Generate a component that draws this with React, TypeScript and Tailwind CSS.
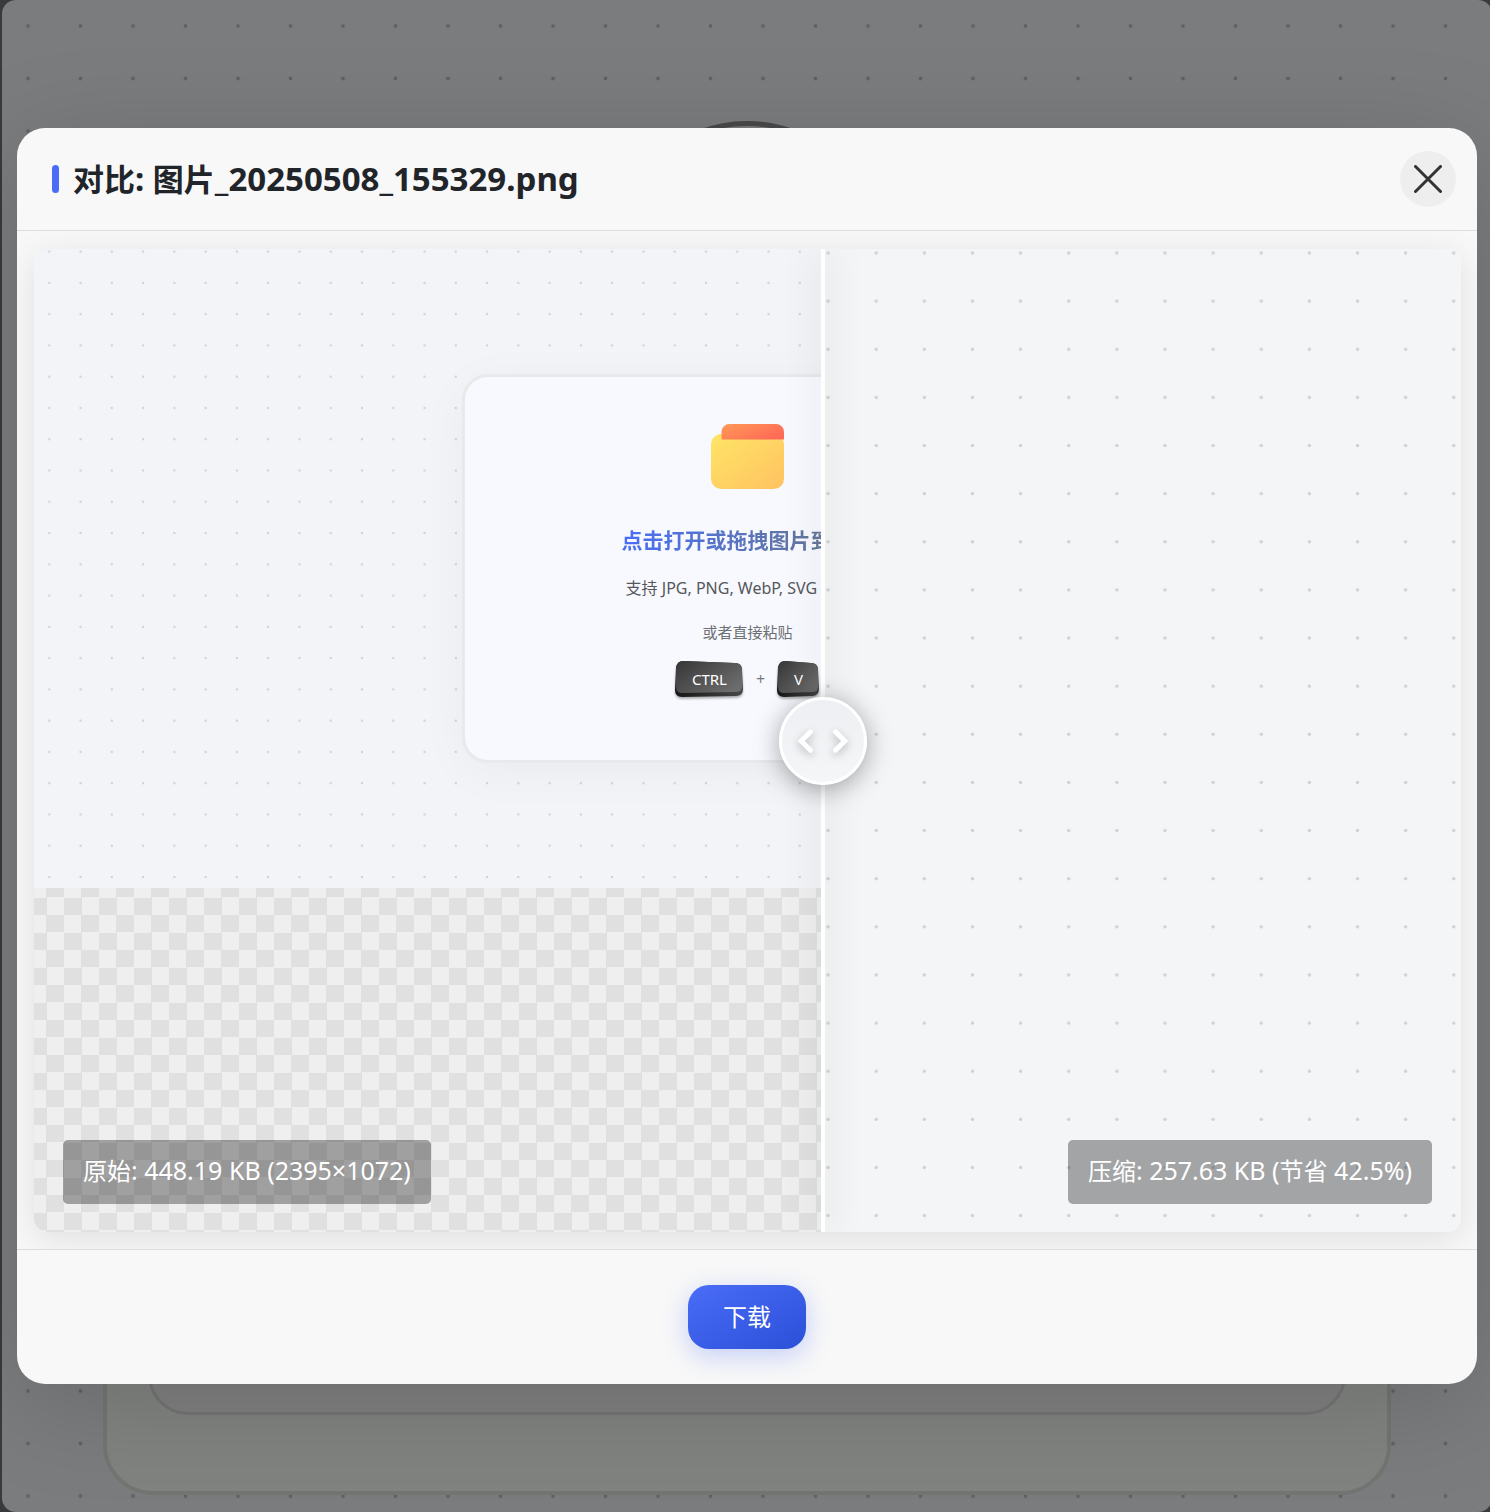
import { useState } from "react";

function DotGrid({ id, pitch, x, y, r, color }: { id: string; pitch: number; x: number; y: number; r: number; color: string }) {
  return (
    <svg className="absolute inset-0 h-full w-full" aria-hidden="true">
      <defs>
        <pattern id={id} width={pitch} height={pitch} patternUnits="userSpaceOnUse" x={x - pitch / 2} y={y - pitch / 2}>
          <circle cx={pitch / 2} cy={pitch / 2} r={r} fill={color} />
        </pattern>
      </defs>
      <rect width="100%" height="100%" fill={`url(#${id})`} />
    </svg>
  );
}

function FolderIcon() {
  return (
    <svg width="74" height="66" viewBox="0 0 74 66" aria-hidden="true">
      <defs>
        <linearGradient id="folder-front" x1="0" y1="0" x2="1" y2="1">
          <stop offset="0" stopColor="#ffe566" />
          <stop offset="1" stopColor="#ffc261" />
        </linearGradient>
        <linearGradient id="folder-tab" x1="0" y1="0" x2="1" y2="0.6">
          <stop offset="0" stopColor="#ff9a56" />
          <stop offset="1" stopColor="#ff6b57" />
        </linearGradient>
      </defs>
      <rect x="1" y="10" width="73" height="55" rx="10" fill="url(#folder-front)" />
      <path d="M11.500 15.500V8a8 8 0 0 1 8-8H66a8 8 0 0 1 8 8v7.500z" fill="url(#folder-tab)" />
    </svg>
  );
}

function Key({ label, wide }: { label: string; wide?: boolean }) {
  const w = wide ? 68 : 42;
  const id = `key-${label}`;
  return (
    <kbd
      className={
        wide
          ? "relative flex h-9 w-[68px] items-center justify-center text-[15px] leading-5 text-white"
          : "relative flex h-9 w-[42px] items-center justify-center text-[15px] leading-5 text-white"
      }
    >
      <svg className="absolute inset-0 overflow-visible drop-shadow-[0_2px_1px_rgba(0,0,0,0.3)]" width={w} height="36" viewBox={`0 0 ${w} 36`} aria-hidden="true">
        <defs>
          <linearGradient id={id} x1="0" y1="0" x2="1" y2="0.7">
            <stop offset="0" stopColor="#363636" />
            <stop offset="1" stopColor="#6c6c6c" />
          </linearGradient>
          <linearGradient id={`${id}-edge`} x1="0" y1="0" x2="1" y2="0">
            <stop offset="0" stopColor="#161616" />
            <stop offset="1" stopColor="#474747" />
          </linearGradient>
        </defs>
        <path
          d={`M1 7Q2 0 8 0L${w - 8} 2Q${w - 1} 2 ${w - 1} 9L${w} 28Q${w} 35 ${w - 7} 35L7 36Q0 36 0 29Z`}
          fill={`url(#${id}-edge)`}
        />
        <path
          d={`M1 7Q2 0 8 0L${w - 8} 2Q${w - 1} 2 ${w - 1} 9L${w - 1} 26Q${w - 1} 31 ${w - 7} 31L7 32Q1 32 1 26Z`}
          fill={`url(#${id})`}
        />
      </svg>
      <span className="relative font-['Noto_Sans',sans-serif]">{label}</span>
    </kbd>
  );
}

function OriginalPicture() {
  return (
    <div className="relative flex h-[65%] items-center justify-center bg-[#f3f4f8]">
      <DotGrid id="dots-original" pitch={31.27} x={15.3} y={2.6} r={1.2} color="#d0d2d6" />
      <div className="relative flex w-[40%] flex-col items-center rounded-[26px] border-[3px] border-[#e8e9eb] bg-[#f8f9fe] pt-[47px] pb-[63px] shadow-[0_10px_50px_rgba(0,0,0,0.04)]">
        <FolderIcon />
        <p className="mt-[34px] bg-linear-to-r from-[#4a6cf7] to-[#6c757d] bg-clip-text text-[21px] leading-8 font-bold whitespace-nowrap text-transparent">
          点击打开或拖拽图片到这里
        </p>
        <p className="mt-5 text-[16px] leading-6 whitespace-nowrap text-[#55575b]">支持 JPG, PNG, WebP, SVG 等格式</p>
        <p className="mt-5 text-[15px] leading-6 text-[#6d7074]">或者直接粘贴</p>
        <div className="mt-[17px] flex items-center">
          <Key label="CTRL" wide />
          <span className="w-[34px] text-center text-[16px] leading-6 text-[#777a7e]">+</span>
          <Key label="V" />
        </div>
      </div>
    </div>
  );
}

function CompareView() {
  const [split, setSplit] = useState(55.3);
  return (
    <div className="relative min-h-0 flex-1 overflow-hidden rounded-[14px] bg-[#f4f5f7]">
      <DotGrid id="dots-compressed" pitch={48.13} x={24} y={4} r={1.7} color="#cfd1d4" />
      <div
        className="absolute inset-0 bg-[repeating-conic-gradient(#e0e0e0_0_25%,#efefef_0_50%)] bg-[length:35px_35px] bg-[position:-5px_1px]"
        style={{ clipPath: `inset(0 ${100 - split}% 0 0)` }}
      >
        <OriginalPicture />
      </div>
      <output className="absolute bottom-7 left-[29px] rounded-[5px] bg-black/33 px-5 pt-3 pb-[15px] text-[25px] leading-9 whitespace-nowrap text-white">
        <span className="text-[24px]">原始</span>: 448.19 KB (2395×1072)
      </output>
      <output className="absolute right-[29px] bottom-7 rounded-[5px] bg-black/33 px-5 pt-3 pb-[15px] text-[25px] leading-9 whitespace-nowrap text-white">
        <span className="text-[24px]">压缩</span>: 257.63 KB (<span className="text-[24px]">节省</span> 42.5%)
      </output>
      <div
        className="absolute inset-y-0 flex w-1 -translate-x-1/2 items-center justify-center bg-white shadow-[0_0_36px_rgba(0,0,0,0.3)]"
        style={{ left: `${split}%` }}
      >
        <div className="flex size-[88px] shrink-0 items-center justify-center rounded-full border-[3px] border-white bg-linear-to-b from-[#eeeff2] to-[#f5f6f8] shadow-[0_4px_26px_rgba(0,0,0,0.35)]">
          <svg
            className="overflow-visible drop-shadow-[0_3px_4px_rgba(0,0,0,0.25)]"
            width="52"
            height="24"
            viewBox="0 0 52 24"
            fill="none"
            stroke="white"
            strokeWidth="5"
            strokeLinecap="round"
            aria-hidden="true"
          >
            <path d="M13.500 2.800L4.200 12l9.300 9.200M38.500 2.800L47.800 12l-9.300 9.200" />
          </svg>
        </div>
      </div>
      <input
        type="range"
        min="0"
        max="100"
        step="0.1"
        value={split}
        onChange={(e) => setSplit(Number(e.target.value))}
        aria-label="对比"
        className="absolute inset-0 h-full w-full cursor-ew-resize opacity-0"
      />
    </div>
  );
}

function Backdrop() {
  return (
    <div className="absolute inset-0 left-0.5 overflow-hidden">
      <div className="absolute inset-0 -right-0.5 flex overflow-hidden rounded-[14px] bg-[#7b7c7e] px-[101px] pb-[17px]" aria-hidden="true">
        <DotGrid id="dots-page" pitch={52.5} x={26} y={26} r={1.9} color="#606162" />
        <div className="absolute inset-x-0 top-[121px] flex justify-center">
          <div className="size-[276px] rounded-full border-[5px] border-[#494949]" />
        </div>
        <div className="relative mt-[400px] flex flex-1 rounded-[50px] border-4 border-[#747573] bg-[#818381] px-[41px] pb-[76px]">
          <div className="flex-1 rounded-[40px] border-[3px] border-[#747474] bg-[#7f7f7f]" />
        </div>
      </div>
    </div>
  );
}

export default function App() {
  return (
    <div className="relative flex h-screen bg-[#3a3a3a] py-32 pr-[13px] pl-[17px] font-['Noto_Sans','Noto_Sans_CJK_SC',sans-serif]">
      <Backdrop />
      <section
        role="dialog"
        aria-labelledby="compare-title"
        className="relative flex min-w-0 flex-1 flex-col overflow-hidden rounded-[28px] bg-[#f8f8f8] shadow-[0_18px_105px_rgba(0,0,0,0.15)]"
      >
        <header className="flex items-center justify-between border-b border-[#dddddd] py-[23px] pr-[21px] pl-[35px]">
          <div className="flex items-center gap-3.5">
            <span className="h-7 w-[7px] rounded-full bg-[#4a6cf7]" />
            <h2 id="compare-title" className="text-[33px] leading-10 font-bold text-[#212529]">
              <span className="text-[31px]">对比</span>: <span className="text-[31px]">图片</span>_20250508_155329.png
            </h2>
          </div>
          <button type="button" aria-label="关闭" className="flex size-14 items-center justify-center rounded-full bg-[#eeeeee]">
            <svg width="28" height="28" viewBox="0 0 28 28" fill="none" stroke="#333333" strokeWidth="3" strokeLinecap="round">
              <path d="M1.500 1.500l25 25M26.500 1.500l-25 25" />
            </svg>
          </button>
        </header>
        <div className="flex min-h-0 flex-1 flex-col overflow-hidden pt-[18px] pr-4 pb-[17px] pl-[17px]">
          <div className="flex min-h-0 flex-1 flex-col rounded-[14px] shadow-[0_7px_35px_rgba(0,0,0,0.1)]">
            <CompareView />
          </div>
        </div>
        <footer className="flex justify-center border-t border-[#dddddd] py-[35px]">
          <button
            type="button"
            className="rounded-[21px] bg-linear-to-br from-[#4a6cf7] to-[#2b50d8] px-[35px] py-3.5 text-[24px] leading-9 text-white shadow-[0_7px_26px_rgba(74,108,247,0.3)]"
          >
            下载
          </button>
        </footer>
      </section>
    </div>
  );
}
